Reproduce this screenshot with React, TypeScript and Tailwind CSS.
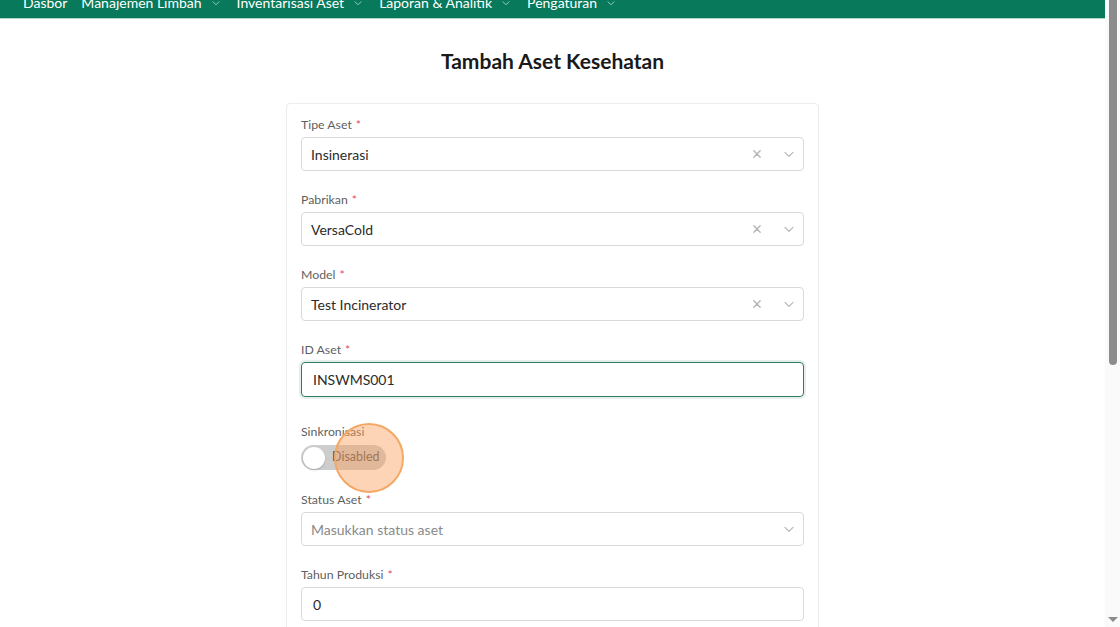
import React from "react";

const Chevron = ({ className = "" }: { className?: string }) => (
  <svg viewBox="0 0 20 20" className={className} fill="none" stroke="currentColor" strokeWidth="1.6" strokeLinecap="round" strokeLinejoin="round">
    <path d="M5 8l5 5 5-5" />
  </svg>
);

const XIcon = ({ className = "" }: { className?: string }) => (
  <svg viewBox="0 0 20 20" className={className} fill="none" stroke="currentColor" strokeWidth="2" strokeLinecap="round">
    <path d="M5.5 5.5l9 9M14.5 5.5l-9 9" />
  </svg>
);

const Label = ({ text, req = true }: { text: string; req?: boolean }) => (
  <div className="text-[12.3px] leading-[16px] text-[#5f5f5f] mb-[4px]">
    {text}
    {req && <span className="text-[#e2504f] ml-[4px]">*</span>}
  </div>
);

const SelectField = ({ label, value, placeholder, clear = true }: { label: string; value?: string; placeholder?: string; clear?: boolean }) => (
  <div className="mb-[21px]">
    <Label text={label} />
    <div className="h-[34px] border border-[#d9d9d9] rounded-[4px] flex items-center pl-[9px] pr-[6px] bg-white">
      <div className={`flex-1 text-[14px] ${value ? "text-[#2b2b2b]" : "text-[#8a8a8a]"}`}>{value ?? placeholder}</div>
      {clear && <XIcon className="w-[14px] h-[14px] text-[#b5b5b5] mr-[17px]" />}
      <Chevron className="w-[16px] h-[16px] text-[#b8b8b8]" />
    </div>
  </div>
);

export default function App() {
  const nav = [
    { t: "Dasbor", c: false },
    { t: "Manajemen Limbah", c: true },
    { t: "Inventarisasi Aset", c: true },
    { t: "Laporan & Analitik", c: true },
    { t: "Pengaturan", c: true },
  ];
  return (
    <div className="w-[1120px] h-[627px] overflow-hidden flex bg-white" style={{ fontFamily: "Lato, 'Noto Sans', sans-serif" }}>
      <div className="flex-1 flex flex-col overflow-hidden relative">
        <div className="h-[32px] mt-[-13px] bg-[#08795a] border-b border-[#a9d9c6] flex items-center pl-[23px] text-white text-[14px] shrink-0">
          {nav.map((n, i) => (
            <div key={i} className="flex items-center mr-[14px]">
              <span>{n.t}</span>
              {n.c && <Chevron className="w-[12px] h-[12px] ml-[8px] mr-[1px] text-[#9fd3bf]" />}
            </div>
          ))}
        </div>
        <h1 className="text-center text-[21px] font-bold text-[#1a1a1a] mt-[29px] leading-[26px]">Tambah Aset Kesehatan</h1>
        <div className="mx-auto mt-[29px] w-[533px] border border-[#ececec] rounded-[4px] px-[14px] pt-[13px]">
          <SelectField label="Tipe Aset" value="Insinerasi" />
          <SelectField label="Pabrikan" value="VersaCold" />
          <SelectField label="Model" value="Test Incinerator" />
          <div className="mb-[27px]">
            <Label text="ID Aset" />
            <div className="h-[35px] border border-[#2f7d5d] rounded-[4px] flex items-center pl-[11px] shadow-[0_0_0_2px_rgba(47,125,93,0.12)]">
              <span className="text-[14px] text-[#2b2b2b]">INSWMS001</span>
            </div>
          </div>
          <div className="mb-[22px] relative">
            <div className="text-[12.3px] leading-[16px] text-[#5f5f5f] mb-[5px]">Sinkronisasi</div>
            <div className="w-[85px] h-[25px] rounded-full bg-[#cdcdcd] flex items-center pl-[2px]">
              <div className="w-[22px] h-[22px] rounded-full bg-white shadow-[0_1px_2px_rgba(0,0,0,0.2)]" />
              <span className="ml-[7px] text-[12.5px] text-[#555]">Disabled</span>
            </div>
            <div className="absolute left-[33px] top-[-1px] w-[70px] h-[70px] rounded-full border-2 border-[#f3a866] bg-[rgba(251,160,90,0.45)] pointer-events-none" />
          </div>
          <SelectField label="Status Aset" placeholder="Masukkan status aset" clear={false} />
          <div className="mb-[21px]">
            <Label text="Tahun Produksi" />
            <div className="h-[34px] border border-[#d9d9d9] rounded-[4px] flex items-center pl-[11px]">
              <span className="text-[14px] text-[#2b2b2b]">0</span>
            </div>
          </div>
        </div>
      </div>
      <div className="w-[15px] h-full bg-[#fafafa] flex flex-col items-center relative shrink-0">
        <div className="w-[8px] h-[365px] bg-[#8c8c8c] rounded-b-[4px]" />
        <div className="absolute bottom-[5px] left-[3px] w-0 h-0 border-l-[5px] border-r-[5px] border-t-[5px] border-l-transparent border-r-transparent border-t-[#8c8c8c]" />
      </div>
    </div>
  );
}
